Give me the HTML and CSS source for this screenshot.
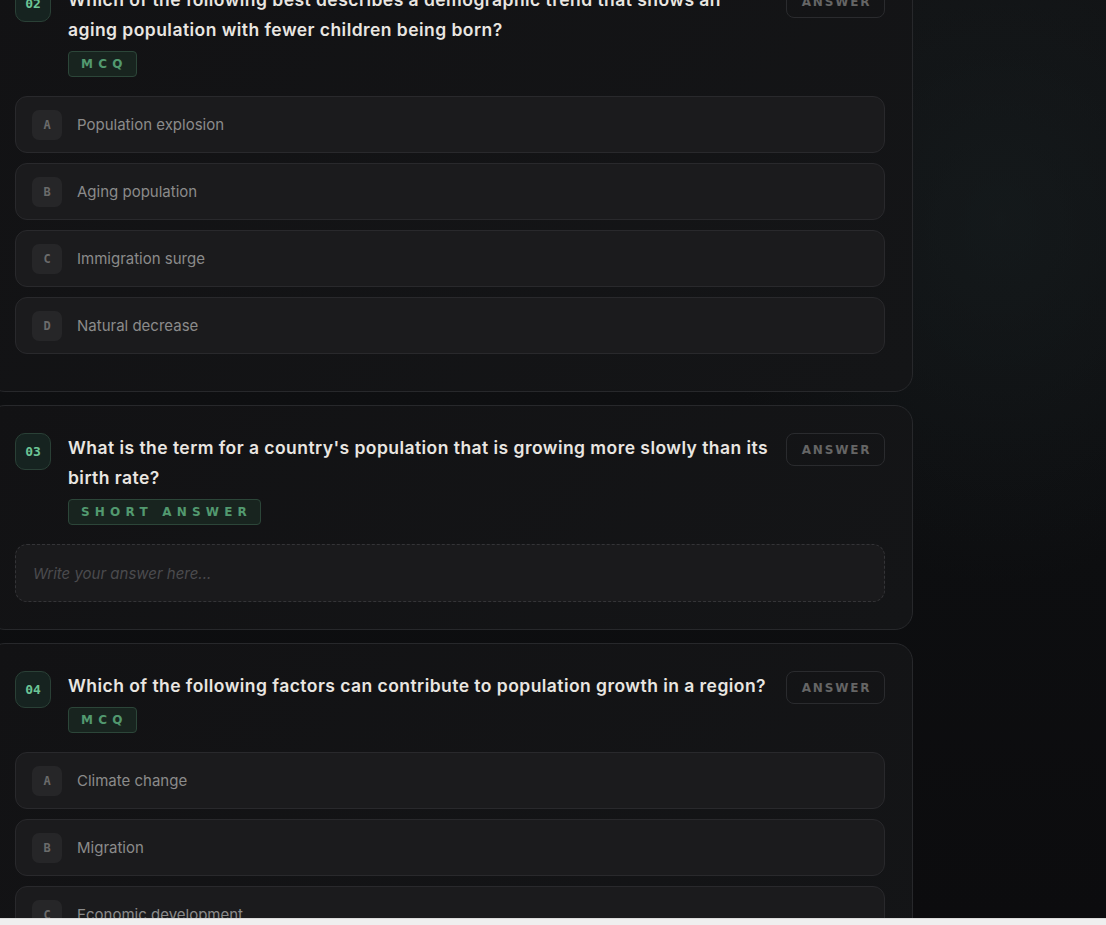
FILE: index.html
```html
<!DOCTYPE html>
<html>
<head>
    <title>Population Quiz</title>
    <meta name="viewport" content="width=device-width, initial-scale=1.0">
    <link rel="stylesheet" href="styles.css">
</head>
<body>
    <div class="viewport">
        <div class="quiz">

            <div class="card">
                <div class="q-head">
                    <div class="q-num">02</div>
                    <div class="q-body">
                        <div class="q-text">Which of the following best describes a demographic trend that shows an<br>aging population with fewer children being born?</div>
                        <span class="q-tag">MCQ</span>
                    </div>
                    <button class="btn-answer">ANSWER</button>
                </div>
                <div class="options">
                    <div class="option"><span class="opt-key">A</span>Population explosion</div>
                    <div class="option"><span class="opt-key">B</span>Aging population</div>
                    <div class="option"><span class="opt-key">C</span>Immigration surge</div>
                    <div class="option"><span class="opt-key">D</span>Natural decrease</div>
                </div>
            </div>

            <div class="card">
                <div class="q-head">
                    <div class="q-num">03</div>
                    <div class="q-body">
                        <div class="q-text">What is the term for a country's population that is growing more slowly than its birth rate?</div>
                        <span class="q-tag">SHORT ANSWER</span>
                    </div>
                    <button class="btn-answer">ANSWER</button>
                </div>
                <input class="answer-input" type="text" placeholder="Write your answer here...">
            </div>

            <div class="card">
                <div class="q-head">
                    <div class="q-num">04</div>
                    <div class="q-body">
                        <div class="q-text">Which of the following factors can contribute to population growth in a region?</div>
                        <span class="q-tag">MCQ</span>
                    </div>
                    <button class="btn-answer">ANSWER</button>
                </div>
                <div class="options">
                    <div class="option"><span class="opt-key">A</span>Climate change</div>
                    <div class="option"><span class="opt-key">B</span>Migration</div>
                    <div class="option"><span class="opt-key">C</span>Economic development</div>
                    <div class="option"><span class="opt-key">D</span>Urbanization</div>
                </div>
            </div>

        </div>
    </div>
    <div class="h-scroll"></div>
</body>
</html>
```

FILE: styles.css
```css
:root {
    --page: #0c0c0e;
    --card: #131315;
    --card-border: #27282b;
    --option: #1b1b1d;
    --option-border: #29292c;
    --text: #e9e6e1;
    --muted: #8b8b8b;
    --green: #6cc596;
}

html, body {
    margin: 0;
    height: 100%;
}

body {
    display: flex;
    flex-direction: column;
    background: var(--page);
    font-family: Inter, 'Noto Sans', sans-serif;
    color: var(--text);
}

.viewport {
    flex: 1;
    overflow: hidden;
    background:
        radial-gradient(ellipse 420px 520px at 1000px 220px, rgba(24, 32, 34, 0.55), transparent 70%),
        linear-gradient(180deg, #111214 0%, #0d0e10 60%, #0c0c0e 100%);
}

.h-scroll {
    height: 6px;
    background: #efefef;
    border-top: 1px solid #dcdcdc;
}

.quiz {
    width: 926px;
    margin: -43px 0 0 -13px;
}

.card {
    background: linear-gradient(135deg, #121214 0%, #141517 100%);
    border: 1px solid var(--card-border);
    border-radius: 18px;
    padding: 27px;
    margin-bottom: 13px;
}

.q-head {
    display: flex;
    align-items: flex-start;
    margin-bottom: 19px;
}

.q-num {
    flex: 0 0 auto;
    width: 34px;
    height: 35px;
    display: grid;
    place-items: center;
    background: #162320;
    border: 1px solid #2a4036;
    border-radius: 10px;
    color: var(--green);
    font-family: 'DejaVu Sans Mono', monospace;
    font-weight: bold;
    font-size: 13px;
}

.q-body {
    flex: 1;
    margin: 0 14px 0 17px;
}

.q-text {
    font-size: 17.5px;
    font-weight: 600;
    line-height: 30px;
    letter-spacing: 0.45px;
}

.q-tag {
    display: inline-block;
    margin-top: 6px;
    height: 24px;
    line-height: 24px;
    padding: 0 8px 0 12px;
    background: #18241f;
    border: 1px solid #2c4639;
    border-radius: 4px;
    color: #52996f;
    font-family: 'DejaVu Sans', sans-serif;
    font-weight: bold;
    font-size: 12px;
    letter-spacing: 5.2px;
}

.btn-answer {
    flex: 0 0 auto;
    width: 99px;
    height: 33px;
    background: transparent;
    border: 1px solid #2a2b2e;
    border-radius: 8px;
    color: #656565;
    font-family: 'DejaVu Sans', sans-serif;
    font-weight: bold;
    font-size: 12px;
    letter-spacing: 1.8px;
    padding: 0 0 0 2px;
    cursor: pointer;
}

.option {
    display: flex;
    align-items: center;
    height: 55px;
    padding: 0 16px;
    margin-bottom: 10px;
    background: var(--option);
    border: 1px solid var(--option-border);
    border-radius: 12px;
    color: var(--muted);
    font-size: 15px;
}

.opt-key {
    width: 30px;
    height: 30px;
    display: grid;
    place-items: center;
    margin-right: 15px;
    background: #262628;
    border-radius: 7px;
    color: #6b6b6b;
    font-family: 'DejaVu Sans Mono', monospace;
    font-weight: bold;
    font-size: 12px;
}

.answer-input {
    display: block;
    width: 100%;
    box-sizing: border-box;
    height: 58px;
    padding: 0 17px;
    background: #1a1a1c;
    border: 1px dashed #343437;
    border-radius: 12px;
    color: var(--text);
    font-family: Inter, 'Noto Sans', sans-serif;
    font-size: 15px;
    outline: none;
}

.answer-input::placeholder {
    color: #4b4b4e;
    font-style: italic;
}
```
